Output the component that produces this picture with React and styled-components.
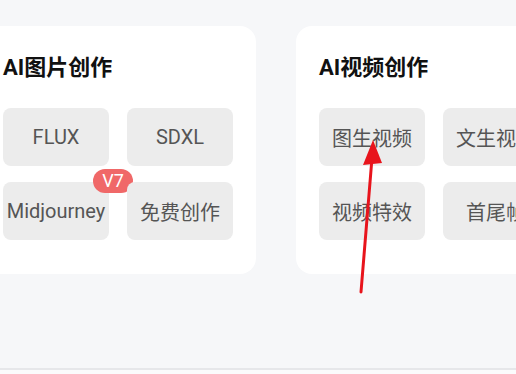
import styled, { createGlobalStyle } from 'styled-components';

const GlobalStyle = createGlobalStyle`
  html, body {
    margin: 0;
    padding: 0;
    background: #fbfbfc;
    overflow: hidden;
    font-family: Roboto, "Noto Sans CJK SC", sans-serif;
  }
`;

const Page = styled.div`
  position: relative;
  width: 516px;
  height: 368px;
  background: #f6f7f9;
  border-bottom: 2px solid #e6e7ea;
  overflow: hidden;
`;

const Row = styled.div`
  display: flex;
  gap: 40px;
  margin-left: -20px;
  padding-top: 26px;
`;

const Card = styled.section`
  flex: 0 0 auto;
  width: 276px;
  box-sizing: border-box;
  padding: 28px 23px 34px;
  background: #ffffff;
  border-radius: 16px;
`;

const Title = styled.h2`
  margin: 0 0 26px;
  font-size: 22px;
  line-height: 28px;
  font-weight: 700;
  color: #111;
  white-space: nowrap;
`;

const Grid = styled.div`
  display: grid;
  grid-template-columns: 106px 106px;
  column-gap: 18px;
  row-gap: 16px;
`;

const Tile = styled.div`
  position: relative;
  height: 58px;
  display: flex;
  align-items: center;
  justify-content: center;
  background: #ececec;
  border-radius: 8px;
  font-size: 20px;
  color: #555;
  white-space: nowrap;
`;

const Badge = styled.span`
  position: absolute;
  top: -13px;
  right: -24px;
  width: 40px;
  height: 24px;
  border-radius: 12px;
  background: #f06868;
  color: #fff;
  font-size: 18px;
  line-height: 24px;
  text-align: center;
`;

const Arrow = styled.svg`
  position: absolute;
  left: 0;
  top: 0;
  pointer-events: none;
`;

const SECTIONS = [
  {
    title: 'AI图片创作',
    items: [{ label: 'FLUX' }, { label: 'SDXL' }, { label: 'Midjourney', badge: 'V7' }, { label: '免费创作' }],
  },
  {
    title: 'AI视频创作',
    items: [{ label: '图生视频' }, { label: '文生视频' }, { label: '视频特效' }, { label: '首尾帧' }],
  },
];

export default function App() {
  return (
    <>
      <GlobalStyle />
      <Page>
        <Row>
          {SECTIONS.map((s) => (
            <Card key={s.title}>
              <Title>{s.title}</Title>
              <Grid>
                {s.items.map((it) => (
                  <Tile key={it.label}>
                    {it.label}
                    {it.badge && <Badge>{it.badge}</Badge>}
                  </Tile>
                ))}
              </Grid>
            </Card>
          ))}
        </Row>
        <Arrow width="516" height="368" viewBox="0 0 516 368">
          <line x1="361" y1="292" x2="372" y2="158" stroke="#e8141c" strokeWidth="3" strokeLinecap="round" />
          <polygon points="373,140 363,165 382,163" fill="#e8141c" />
        </Arrow>
      </Page>
    </>
  );
}
